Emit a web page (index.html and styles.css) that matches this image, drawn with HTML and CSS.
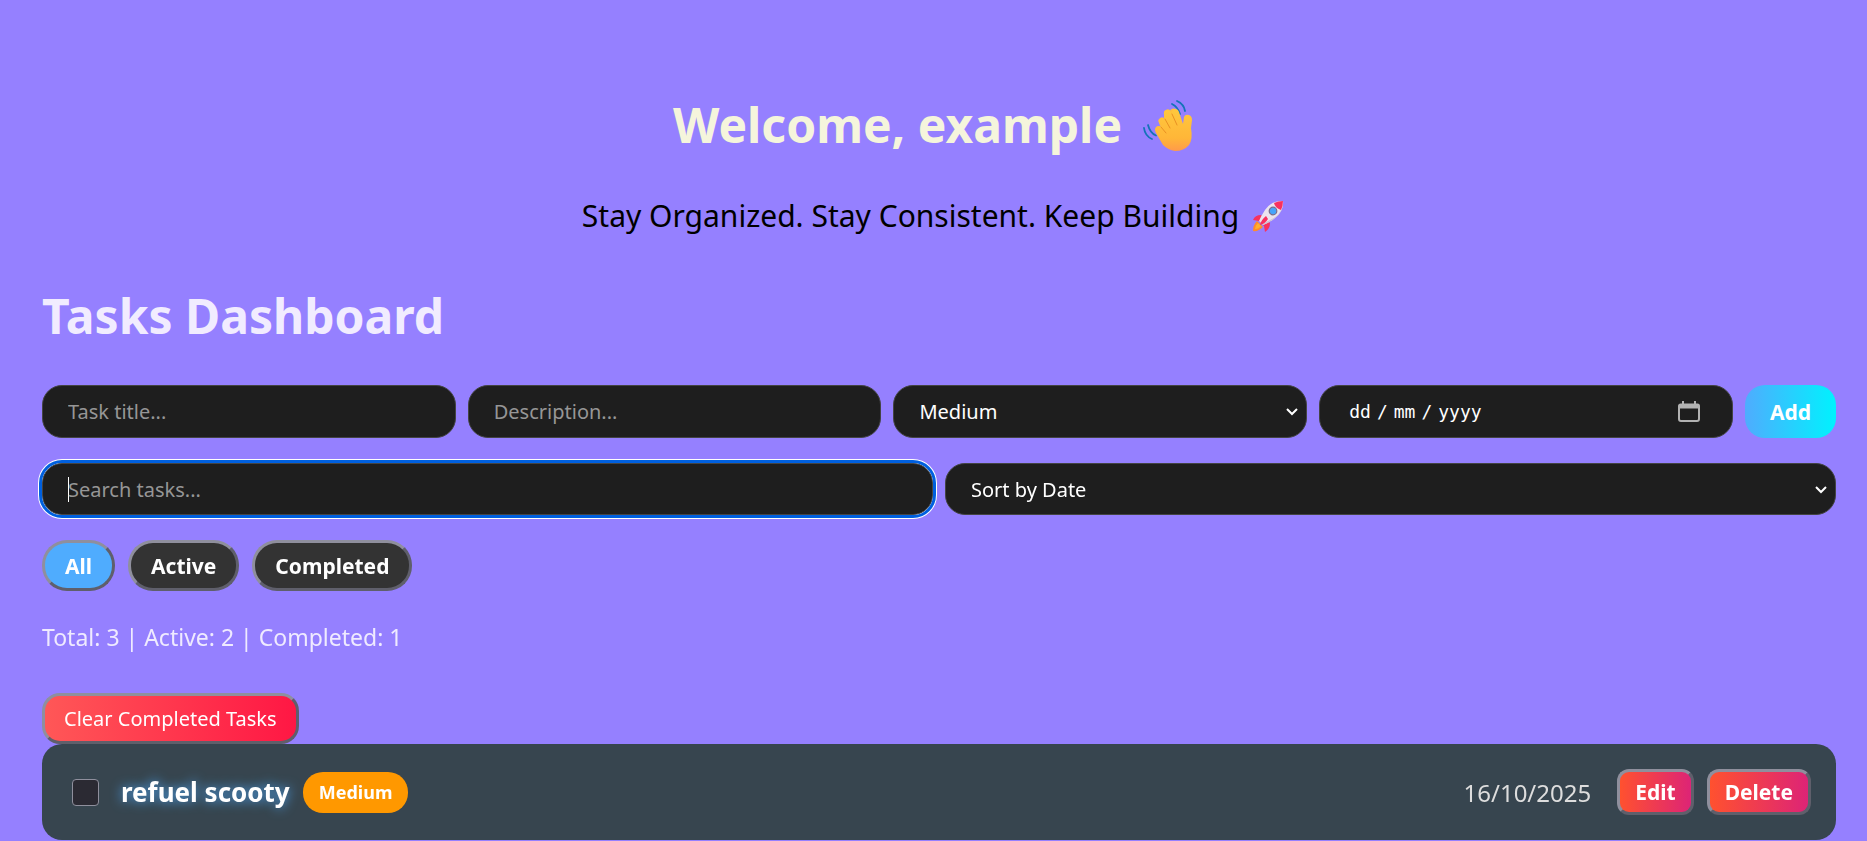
FILE: index.html
```html
<!DOCTYPE html>
<html lang="en-GB">
<head>
<meta charset="utf-8">
<title>Tasks Dashboard</title>
<link rel="stylesheet" href="styles.css">
</head>
<body>
<header class="hero">
  <h1 class="hero-title">Welcome, example
    <svg class="wave" viewBox="0 0 52 52" role="img" aria-label="waving hand">
      <defs>
        <linearGradient id="skin" x1="0" y1="0" x2="0" y2="1"><stop offset="0" stop-color="#ffc83d"/><stop offset=".7" stop-color="#ffb638"/><stop offset="1" stop-color="#ff9a4a"/></linearGradient>
      </defs>
      <g fill="none" stroke="#1573b8" stroke-width="1.8" stroke-linecap="round">
        <path d="M30 5q6 3 8 10M35 2q7 3 8 10M6 26q2 8 8 10.500M2 29q1 8 8 11"/>
      </g>
      <g fill="none" stroke="#ffc03b" stroke-width="7" stroke-linecap="round">
        <path d="M25.500 14l7 17M31.500 13l6 16"/><path d="M20 22l10 14M18 31l12 12"/>
      </g>
      <path fill="url(#skin)" d="M22 16q-1-4 3-5 3 0 4 3l1 2q-1-5 3-6 3 0 4 3l4 12 1-7q1-3 5-2 3 1 3 5l-1 8q2 11-2 17-5 6-14 6-7-1-12-6L14 34q-2-4 0-6 2-2 5 0-3-4-1-7 2-2 4-1Z"/>
      <path fill="none" stroke="#e99123" stroke-width="1" stroke-linecap="round" d="M23 20l5 9M30 15l5 11M19 28l5 6"/>
    </svg>
  </h1>
  <p class="hero-text">Stay Organized. Stay Consistent. Keep Building
    <svg class="rocket" viewBox="0 0 34 34" role="img" aria-label="rocket">
      <path fill="#ff8b2b" d="M6 22q-4 4-4 10 5 1 10-4Z"/>
      <path fill="#ffb02e" d="M7 24q-3 3-3 6 4 0 6-3Z"/>
      <path fill="#f8315f" d="M10 16q-6 0-8 5l6 1 5 5 1 6q5-3 5-9Z"/>
      <path fill="#ebe3ee" d="M32 2q-11-1-18 9-4 6-6 11l4 4q6-2 12-7Q33 12 32 2Z"/>
      <path fill="#cdc4d6" d="M31 9q-3 8-12 12-4 2-8 4l1 1q6-2 12-7 6-5 7-10Z"/>
      <path fill="#f8315f" d="M32 2q-5 0-9 2 1 5 7 7 2-4 2-9ZM15 17q-5 4-6 9 5-1 8-6Z"/>
      <circle cx="22" cy="12" r="3.800" fill="#46a4fb" stroke="#776d8c" stroke-width="1.200"/>
    </svg>
  </p>
</header>

<main class="dashboard">
  <h2 class="dashboard-title">Tasks Dashboard</h2>

  <form class="row add-row">
    <input class="field" type="text" placeholder="Task title..." aria-label="Task title">
    <input class="field" type="text" placeholder="Description..." aria-label="Description">
    <div class="select-wrap">
      <select class="field" aria-label="Priority"><option>Low</option><option selected>Medium</option><option>High</option></select>
      <svg class="chevron" viewBox="0 0 12 8" aria-hidden="true"><path d="M1 1l5 5 5-5"/></svg>
    </div>
    <div class="date-wrap">
      <input class="field date" type="date" aria-label="Due date">
      <svg class="calendar" viewBox="0 0 22 22" aria-hidden="true"><path d="M2.500 4.500h17a1.500 1.500 0 0 1 1.500 1.500v13a2 2 0 0 1-2 2H3a2 2 0 0 1-2-2V6a1.500 1.500 0 0 1 1.500-1.500ZM5 1v4M17 1v4"/><path class="calendar-top" d="M1 6.500h20"/></svg>
    </div>
    <button class="add" type="button">Add</button>
  </form>

  <div class="row filter-row">
    <input class="field search" type="text" placeholder="Search tasks..." aria-label="Search tasks" autofocus>
    <div class="select-wrap">
      <select class="field" aria-label="Sort order"><option>Sort by Date</option><option>Sort by Priority</option></select>
      <svg class="chevron" viewBox="0 0 12 8" aria-hidden="true"><path d="M1 1l5 5 5-5"/></svg>
    </div>
  </div>

  <div class="tabs">
    <button class="tab active" type="button">All</button>
    <button class="tab" type="button">Active</button>
    <button class="tab" type="button">Completed</button>
  </div>

  <p class="stats">Total: 3 | Active: 2 | Completed: 1</p>

  <button class="clear" type="button">Clear Completed Tasks</button>

  <ul class="tasks">
    <li class="task">
      <input class="check" type="checkbox" id="task-1">
      <label class="task-title" for="task-1">refuel scooty</label>
      <span class="badge">Medium</span>
      <time class="due" datetime="2025-10-16">16/10/2025</time>
      <button class="action" type="button">Edit</button>
      <button class="action" type="button">Delete</button>
    </li>
  </ul>
</main>
</body>
</html>
```
FILE: styles.css
```css
* {
  box-sizing: border-box;
}

body {
  margin: 0;
  background: #9580ff;
  font-family: "Noto Sans", "Open Sans", sans-serif;
}

button,
input,
select {
  font-family: inherit;
  font-size: 21px;
}

.hero {
  padding-top: 95px;
  text-align: center;
}

.hero-title,
.hero-text {
  display: flex;
  justify-content: center;
  align-items: center;
  margin: 0;
}

.hero-title {
  gap: 20px;
  color: beige;
  font-size: 48px;
  line-height: 60px;
}

.hero-text {
  gap: 12px;
  margin-top: 41px;
  color: #000;
  font-size: 30px;
  line-height: 40px;
}

.wave {
  width: 52px;
  height: 52px;
}

.rocket {
  width: 34px;
  height: 34px;
}

.dashboard {
  padding: 50px 31px 0 42px;
}

.dashboard-title {
  margin: 0 0 39px;
  color: #f1ecff;
  font-size: 48px;
  line-height: 60px;
}

.row {
  display: grid;
  gap: 12px;
  margin-bottom: 25px;
}

.add-row {
  grid-template-columns: repeat(4, minmax(0, 1fr)) auto;
  grid-auto-rows: 53px;
}

.filter-row {
  grid-template-columns: repeat(2, minmax(0, 1fr));
  grid-auto-rows: 52px;
}

.select-wrap,
.date-wrap {
  position: relative;
}

.field {
  width: 100%;
  height: 100%;
  padding: 0 25px;
  border: 1px solid #444;
  border-radius: 20px;
  background: #1e1e1e;
  color: #fff;
  font-size: 20px;
  appearance: none;
}

.field::placeholder {
  color: #969696;
}

.search:focus {
  outline: 3px solid #0060df;
  box-shadow: 0 0 0 4px #fff;
}

.search:focus:placeholder-shown {
  background: linear-gradient(#fff, #fff) 25px center / 1px 25px no-repeat #1e1e1e;
  caret-color: transparent;
}

.chevron {
  position: absolute;
  top: 23px;
  right: 9px;
  width: 12px;
  height: 8px;
  fill: none;
  stroke: #fff;
  stroke-width: 2;
  pointer-events: none;
}

.date {
  padding-left: 29px;
  font-family: "DejaVu Sans Mono", monospace;
  font-size: 18px;
}

.date::-webkit-datetime-edit-fields-wrapper {
  display: inline-grid;
  grid-auto-flow: column;
  grid-template-columns: repeat(5, auto);
}

.date::-webkit-datetime-edit-day-field,
.date::-webkit-datetime-edit-month-field,
.date::-webkit-datetime-edit-year-field {
  grid-row: 1;
  padding: 0;
}

.date::-webkit-datetime-edit-day-field {
  grid-column: 1;
}

.date::-webkit-datetime-edit-month-field {
  grid-column: 3;
}

.date::-webkit-datetime-edit-year-field {
  grid-column: 5;
}

.date::-webkit-datetime-edit-text {
  grid-row: 1;
  padding: 0 6px;
}

.date::-webkit-calendar-picker-indicator {
  opacity: 0;
}

.calendar {
  position: absolute;
  top: 15px;
  right: 33px;
  width: 22px;
  height: 22px;
  fill: none;
  stroke: #b2b2b2;
  stroke-width: 2;
  pointer-events: none;
}

.calendar-top {
  stroke-width: 4;
}

.add {
  padding: 0 25px;
  border: 0;
  border-radius: 20px;
  background: linear-gradient(to right, #4facfe, #00f2fe);
  color: #fff;
  font-weight: 700;
}

.tabs {
  display: flex;
  gap: 13px;
}

.tab {
  height: 51px;
  padding: 0 20px;
  border: 3px solid;
  border-color: #8f8f9d #5f5f6b #5f5f6b #8f8f9d;
  border-radius: 25px;
  background: #333;
  color: #fff;
  font-weight: 700;
}

.tab.active {
  background: #4facfe;
}

.stats {
  margin: 30px 0 40px;
  color: #efeaff;
  font-size: 23px;
  line-height: 32px;
}

.clear {
  display: block;
  height: 51px;
  padding: 0 19px;
  border: 3px solid;
  border-color: #8f8f9d #5f5f6b #5f5f6b #8f8f9d;
  border-radius: 18px;
  background: linear-gradient(to right, #ff5757, #ff1744);
  color: #fff;
  font-size: 20px;
}

.tasks {
  margin: 0;
  padding: 0;
  list-style: none;
}

.task {
  display: flex;
  align-items: center;
  height: 96px;
  padding: 0 25px 0 30px;
  border-radius: 20px;
  background: #37454f;
}

.check {
  width: 27px;
  height: 27px;
  margin: 0 22px 0 0;
  border: 1px solid #8f8f9d;
  border-radius: 4px;
  background: #2b2a33;
  appearance: none;
}

.task-title {
  color: #fff;
  font-size: 26px;
  font-weight: 700;
  text-shadow: 0 0 12px #4facfe;
}

.badge {
  margin-left: 13px;
  padding: 8px 16px;
  border-radius: 20px;
  background: #ff9800;
  color: #fff;
  font-size: 18px;
  font-weight: 700;
  line-height: 25px;
}

.due {
  margin: 0 13px 0 auto;
  color: #ddd;
  font-size: 24px;
}

.action {
  height: 46px;
  margin-left: 13px;
  padding: 0 15px;
  border: 3px solid;
  border-color: #8f8f9d #5f5f6b #5f5f6b #8f8f9d;
  border-radius: 12px;
  background: linear-gradient(to right, #ff512f, #dd2476);
  color: #fff;
  font-weight: 700;
}
```
